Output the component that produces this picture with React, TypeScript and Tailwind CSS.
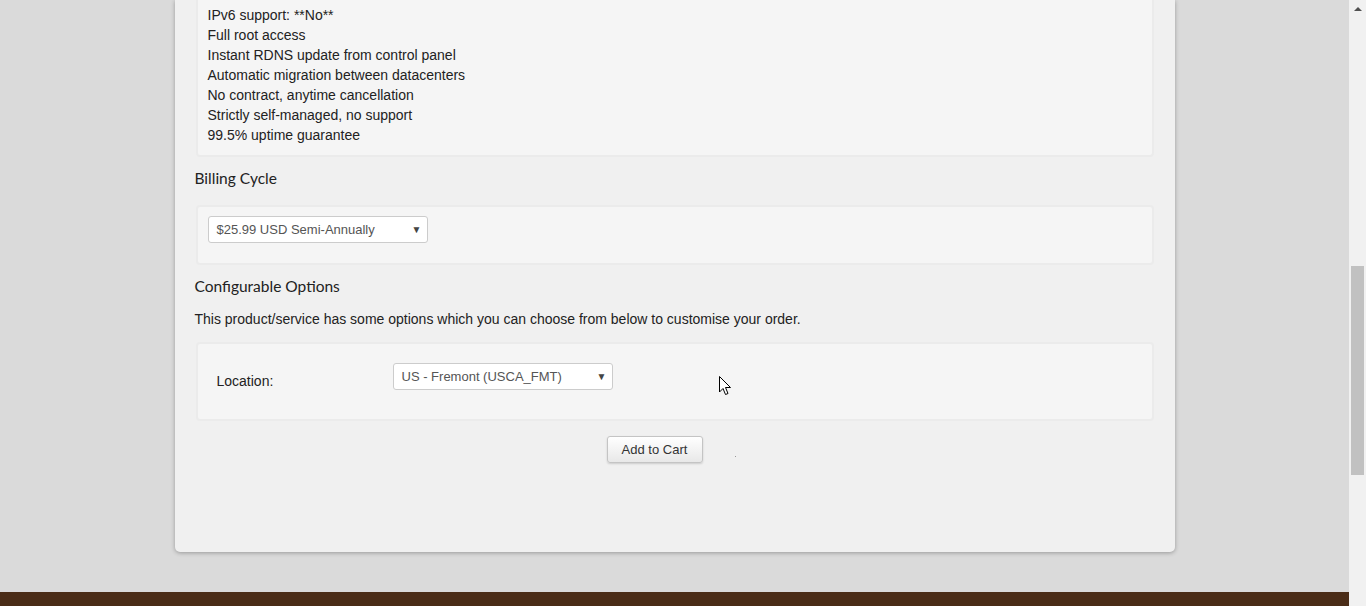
import React from "react";

const features = [
  "IPv6 support: **No**",
  "Full root access",
  "Instant RDNS update from control panel",
  "Automatic migration between datacenters",
  "No contract, anytime cancellation",
  "Strictly self-managed, no support",
  "99.5% uptime guarantee",
];

function Select({ value }: { value: string }) {
  return (
    <div className="flex h-[27px] w-[220px] items-center justify-between rounded-[3px] border border-[#cccccc] bg-white pl-[8px] pr-[5px] text-[13px] text-[#555555]">
      <span>{value}</span>
      <span className="text-[10px] text-[#444444]">▼</span>
    </div>
  );
}

export default function App() {
  return (
    <div className="flex h-[606px] w-full overflow-hidden bg-[#dadada] font-['Liberation_Sans',Arial,sans-serif] text-[14px] leading-[20px] text-[#222222]">
      <div className="relative flex flex-1 flex-col">
        {/* product card, scrolled so the top is cut off */}
        <div className="mx-auto flex w-[1000px] flex-col rounded-b-[5px] bg-[#f0f0f0] px-5 pb-[89px] shadow-[0_1px_4px_rgba(0,0,0,0.3)]">
          <div className="mx-px rounded-b-[4px] border-2 border-t-0 border-[#ebebeb] bg-[#f5f5f5] pb-[10px] pl-[10px] pt-[5px]">
            {features.map((f) => (
              <div key={f}>{f}</div>
            ))}
          </div>

          <h3 className="mt-[10px] font-['Lato',sans-serif] text-[15.5px] leading-[22px] text-[#222222]">
            Billing Cycle
          </h3>
          <div className="mx-px mt-[16px] rounded-[4px] border-2 border-[#ebebeb] bg-[#f5f5f5] pb-[20px] pl-[10px] pt-[9px]">
            <Select value="$25.99 USD Semi-Annually" />
          </div>

          <h3 className="mt-[10px] font-['Lato',sans-serif] text-[15.5px] leading-[22px] text-[#222222]">
            Configurable Options
          </h3>
          <p className="mt-[12px]">
            This product/service has some options which you can choose from below to customise your order.
          </p>
          <div className="mx-px mt-[13px] rounded-[4px] border-2 border-[#ebebeb] bg-[#f5f5f5] pb-[28px] pt-[19px]">
            <div className="flex">
              <div className="mt-[8px] w-[195px] pl-[19px]">Location:</div>
              <Select value="US - Fremont (USCA_FMT)" />
            </div>
          </div>

          <div className="mt-[15px] flex justify-center">
            <button className="h-[27px] w-[96px] rounded-[3px] border border-[#c4c4c4] bg-gradient-to-b from-white to-[#e8e8e8] text-[13px] text-[#333333] shadow-[0_1px_2px_rgba(0,0,0,0.15)]">
              Add to Cart
            </button>
            <span className="flex w-[40px] items-end pb-[6px] pl-[32px]">
              <span className="h-px w-px bg-[#999999]" />
            </span>
          </div>
        </div>

        <div className="mt-[40px] h-[14px] bg-[#4a2c17]" />

        {/* mouse pointer */}
        <svg
          className="absolute left-[719px] top-[376px]"
          width="13"
          height="20"
          viewBox="0 0 13 20"
        >
          <path
            d="M0.5 0.5 L0.5 16 L4 12.5 L6.5 18.5 L9 17.5 L6.5 11.5 L11.5 11.5 Z"
            fill="white"
            stroke="black"
            strokeWidth="1"
            strokeLinejoin="miter"
          />
        </svg>
      </div>

      {/* scrollbar */}
      <div className="flex w-[17px] flex-col items-center bg-[#f1f1f1]">
        <div className="mt-[7px] h-0 w-0 border-x-[4px] border-b-[4px] border-x-transparent border-b-[#505050]" />
        <div className="mt-[255px] h-[209px] w-[13px] bg-[#c1c1c1]" />
      </div>
    </div>
  );
}
